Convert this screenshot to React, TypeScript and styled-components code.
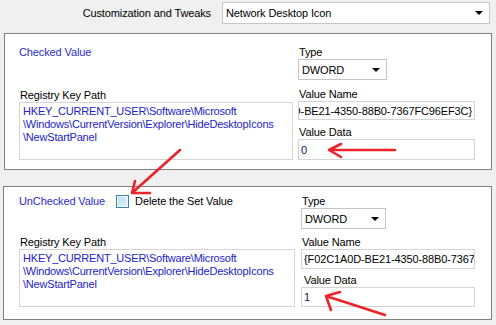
import React, {FC} from 'react';
import styled, {createGlobalStyle} from 'styled-components';

const GlobalStyle = createGlobalStyle`
  html, body {
    margin: 0;
    padding: 0;
    background: #f0f0f0;
  }
  body {
    font-family: "Liberation Sans", Arial, sans-serif;
    font-size: 11px;
    letter-spacing: -0.12px;
    color: #000;
  }
`

const Page = styled.div`
  position: relative;
  width: 496px;
  height: 325px;
  overflow: hidden;
  background: #f0f0f0;
`

const TopBar = styled.div`
  display: flex;
  justify-content: flex-end;
  align-items: center;
  gap: 11px;
  padding: 2px 6px 0 0;
  height: 22px;
  margin-bottom: 9px;
`

const TopLabel = styled.span`
  font-size: 11px;
  color: #000;
`

const Combo = styled.div<{ $w: number; $h?: number }>`
  box-sizing: border-box;
  width: ${p => p.$w}px;
  height: ${p => p.$h || 21}px;
  border: 1px solid #c5c5c5;
  background: #fff;
  display: flex;
  align-items: center;
  justify-content: space-between;
  padding: 0 6px 0 3px;
  font-size: 11px;
  color: #000;
`

const DownArrow = styled.span`
  width: 0;
  height: 0;
  border-left: 4px solid transparent;
  border-right: 4px solid transparent;
  border-top: 4px solid #000;
`

const Panel = styled.div<{ $top: number; $bottom: number; $left: number; $cols: string; $gap: number; $mx: string }>`
  box-sizing: border-box;
  margin: ${p => p.$mx};
  border: 1px solid #7f7f7f;
  background: #fff;
  padding: ${p => `${p.$top}px 0 ${p.$bottom}px ${p.$left}px`};
  display: grid;
  grid-template-columns: ${p => p.$cols};
  column-gap: ${p => p.$gap}px;
`

const Column = styled.div`
  display: flex;
  flex-direction: column;
  min-width: 0;
`

const HeadRow = styled.div`
  display: flex;
  align-items: center;
  height: 13px;
`

const Heading = styled.span`
  color: #2b2bd6;
  font-size: 11px;
  line-height: 13px;
`

const Check = styled.span`
  box-sizing: border-box;
  width: 13px;
  height: 13px;
  margin: 0 6px 0 11px;
  border: 1px solid #3c7fb1;
  background: linear-gradient(135deg, #bcdcf4, #e6f3fc);
  box-shadow: inset 0 0 0 1px #f4faff;
`

const CheckText = styled.span`
  font-size: 11px;
  line-height: 13px;
`

const Label = styled.span<{ $mt?: number; $indent?: number }>`
  display: block;
  font-size: 11px;
  line-height: 13px;
  height: 13px;
  margin-top: ${p => p.$mt || 0}px;
  padding-left: ${p => p.$indent || 1}px;
`

const Spacer = styled.div`
  flex: 1;
`

const PathBox = styled.div`
  box-sizing: border-box;
  height: 58px;
  border: 1px solid #d4d4d4;
  padding: 2px 3px;
  color: #2222cc;
  font-size: 11px;
  letter-spacing: -0.2px;
  line-height: 13px;
  white-space: pre;
  overflow: hidden;
`

const TextBox = styled.div<{ $h: number; $end?: boolean; $color?: string }>`
  box-sizing: border-box;
  height: ${p => p.$h}px;
  border: 1px solid #d4d4d4;
  padding: 0 2px;
  display: flex;
  align-items: center;
  justify-content: ${p => (p.$end ? 'flex-end' : 'flex-start')};
  white-space: nowrap;
  overflow: hidden;
  font-size: 11px;
  color: ${p => p.$color || '#000'};
`

const Overlay = styled.svg`
  position: absolute;
  left: 0;
  top: 0;
  pointer-events: none;
`

const PATH = 'HKEY_CURRENT_USER\\Software\\Microsoft\n\\Windows\\CurrentVersion\\Explorer\\HideDesktopIcons\n\\NewStartPanel'
const GUID = '{F02C1A0D-BE21-4350-88B0-7367FC96EF3C}'

const Arrows: FC = () => (
    <Overlay width={496} height={325} viewBox="0 0 496 325">
        <g stroke="#ee2229" strokeWidth={2.6} fill="none" strokeLinecap="round" strokeLinejoin="round">
            <path d="M395 150 L329 150 M341 144 L329 150 L341 157"/>
            <path d="M180 150 L132 193 M150 193 L132 193 L135 181"/>
            <path d="M385 315 L326 296 M340 292 L326 296 L331 310"/>
        </g>
    </Overlay>
)

const App: FC = () => {
    return (
        <Page>
            <GlobalStyle/>
            <TopBar>
                <TopLabel>Customization and Tweaks</TopLabel>
                <Combo $w={268} $h={22}>
                    <span>Network Desktop Icon</span>
                    <DownArrow/>
                </Combo>
            </TopBar>

            <Panel $top={12} $bottom={9} $left={14} $cols="274px 177px" $gap={5} $mx="0 4px 16px 4px">
                <Column>
                    <HeadRow>
                        <Heading>Checked Value</Heading>
                    </HeadRow>
                    <Spacer/>
                    <Label>Registry Key Path</Label>
                    <PathBox>{PATH}</PathBox>
                </Column>
                <Column>
                    <Label>Type</Label>
                    <Combo $w={89}>
                        <span>DWORD</span>
                        <DownArrow/>
                    </Combo>
                    <Label $mt={8}>Value Name</Label>
                    <TextBox $h={19} $end>{GUID}</TextBox>
                    <Label $mt={6}>Value Data</Label>
                    <TextBox $h={21} $color="#101060">0</TextBox>
                </Column>
            </Panel>

            <Panel $top={8} $bottom={12} $left={15} $cols="276px 174px" $gap={6} $mx="0 4px 0 3px">
                <Column>
                    <HeadRow>
                        <Heading>UnChecked Value</Heading>
                        <Check/>
                        <CheckText>Delete the Set Value</CheckText>
                    </HeadRow>
                    <Spacer/>
                    <Label>Registry Key Path</Label>
                    <PathBox>{PATH}</PathBox>
                </Column>
                <Column>
                    <Label>Type</Label>
                    <Combo $w={85}>
                        <span>DWORD</span>
                        <DownArrow/>
                    </Combo>
                    <Label $mt={7}>Value Name</Label>
                    <TextBox $h={20}>{GUID}</TextBox>
                    <Label $mt={5} $indent={3}>Value Data</Label>
                    <TextBox $h={20} $color="#101060">1</TextBox>
                </Column>
            </Panel>

            <Arrows/>
        </Page>
    );
};

export default App;
